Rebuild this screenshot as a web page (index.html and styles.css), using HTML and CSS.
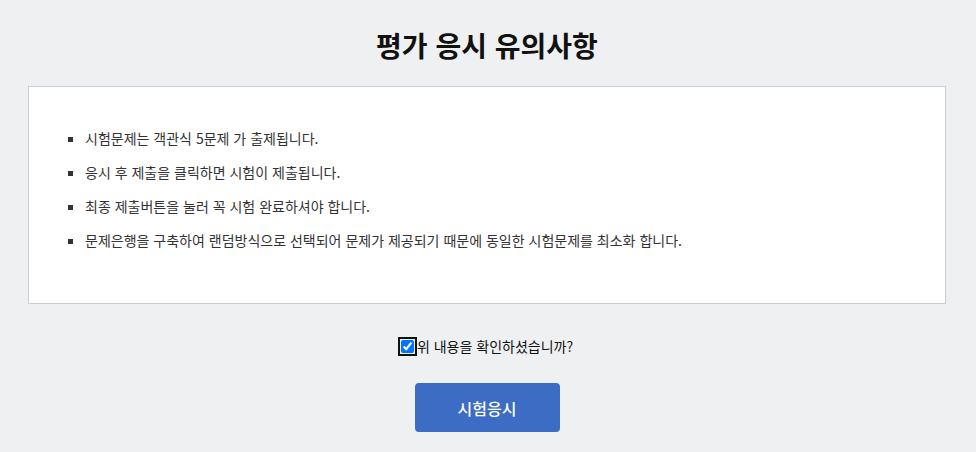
FILE: index.html
```html
<!DOCTYPE html>
<html lang="ko">
  <head>
    <meta charset="utf-8">
    <title>평가 응시 유의사항</title>
    <link rel="stylesheet" href="styles.css">
  </head>
  <body>
    <div class="wrap">
      <h1 class="title">평가 응시 유의사항</h1>
      <div class="notice">
        <ul>
          <li>시험문제는 객관식 5문제 가 출제됩니다.</li>
          <li>응시 후 제출을 클릭하면 시험이 제출됩니다.</li>
          <li>최종 제출버튼을 눌러 꼭 시험 완료하셔야 합니다.</li>
          <li>문제은행을 구축하여 랜덤방식으로 선택되어 문제가 제공되기 때문에 동일한 시험문제를 최소화 합니다.</li>
        </ul>
      </div>
      <label class="agree"><input type="checkbox" checked>위 내용을 확인하셨습니까?</label>
      <div class="btns">
        <button type="button" class="btn">시험응시</button>
      </div>
    </div>
  </body>
</html>
```

FILE: styles.css
```css
* {
  margin: 0;
  padding: 0;
  box-sizing: border-box;
}
body {
  background: #eff0f2;
  font-family: "Noto Sans CJK KR", "Noto Sans", sans-serif;
  color: #333;
}
.wrap {
  padding: 25px 30px 0 28px;
}
.title {
  text-align: center;
  font-size: 28px;
  font-weight: 700;
  line-height: 40px;
  color: #111;
  margin-bottom: 21px;
}
.notice {
  background: #fff;
  border: 1px solid #c9ced6;
  padding: 41px 20px 39px 56px;
}
.notice ul {
  list-style: square;
}
.notice li {
  font-size: 14px;
  line-height: 20px;
  margin-bottom: 14px;
}
.agree {
  display: flex;
  justify-content: center;
  align-items: center;
  margin-top: 33px;
  font-size: 14px;
  line-height: 18px;
  color: #111;
}
.agree input {
  width: 13px;
  height: 13px;
  margin: 0 3px 0 0;
  outline: 2px solid #111;
  outline-offset: 1px;
  border-radius: 2px;
}
.btns {
  display: flex;
  justify-content: center;
  margin-top: 28px;
}
.btn {
  width: 145px;
  height: 49px;
  background: #3d6cc4;
  border: none;
  border-radius: 4px;
  color: #fff;
  font-family: inherit;
  font-size: 16px;
  font-weight: 500;
}
```
